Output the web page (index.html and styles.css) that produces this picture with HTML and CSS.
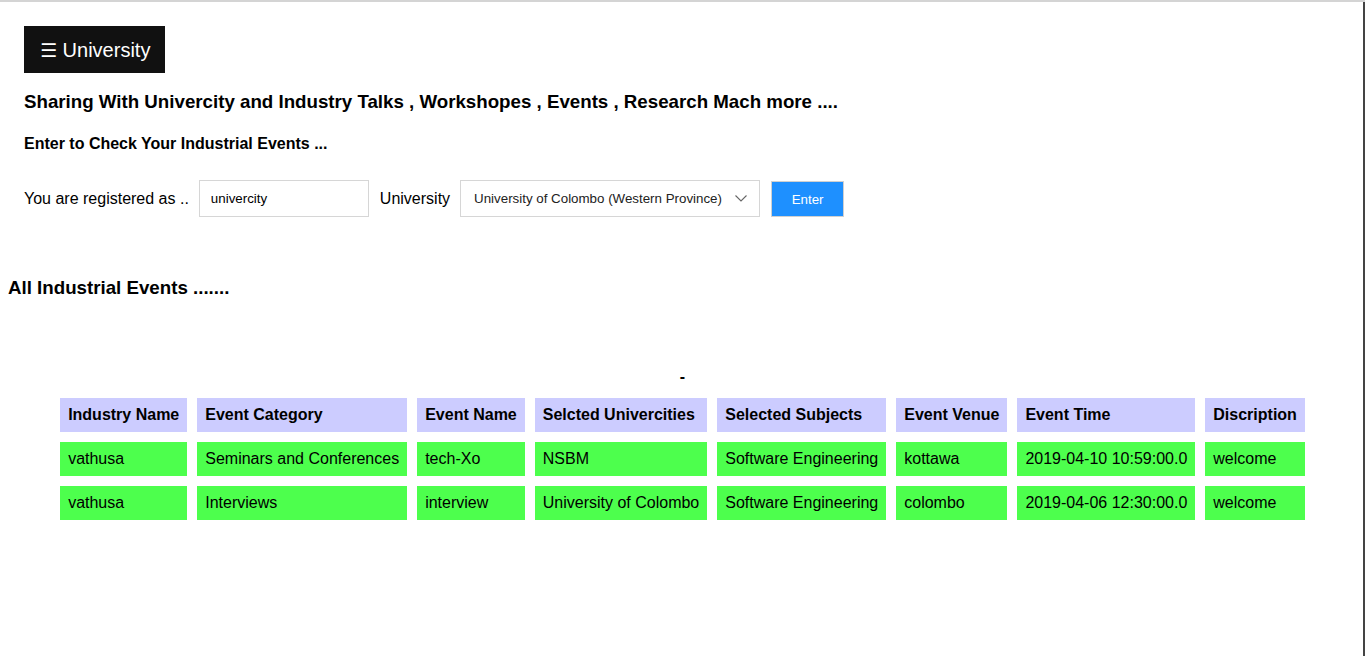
FILE: index.html
```html
<!DOCTYPE html>
<html lang="en">
<head>
<meta charset="utf-8">
<title>University</title>
<link rel="stylesheet" href="styles.css">
</head>
<body>
<div class="top">
  <div class="brand"><span class="burger">☰</span> University</div>
  <h3 class="lead">Sharing With Univercity and Industry Talks , Workshopes , Events , Research Mach more ....</h3>
  <h4 class="sub">Enter to Check Your Industrial Events ...</h4>
  <form class="reg">
    <label class="lbl">You are registered as ..</label>
    <input class="field" type="text" value="univercity">
    <label class="lbl">University</label>
    <div class="sel-wrap">
      <select class="sel">
        <option>University of Colombo (Western Province)</option>
      </select>
      <svg class="chev" width="12" height="7" viewBox="0 0 12 7"><path d="M0.5 0.5 L6 6 L11.5 0.5" fill="none" stroke="#666" stroke-width="1.1"/></svg>
    </div>
    <button class="btn" type="button">Enter</button>
  </form>
</div>
<h3 class="all">All Industrial Events .......</h3>
<div class="dash">-</div>
<table class="events">
  <tr>
    <th>Industry Name</th><th>Event Category</th><th>Event Name</th><th>Selcted Univercities</th><th>Selected Subjects</th><th>Event Venue</th><th>Event Time</th><th>Discription</th>
  </tr>
  <tr>
    <td>vathusa</td><td>Seminars and Conferences</td><td>tech-Xo</td><td>NSBM</td><td>Software Engineering</td><td>kottawa</td><td>2019-04-10 10:59:00.0</td><td>welcome</td>
  </tr>
  <tr>
    <td>vathusa</td><td>Interviews</td><td>interview</td><td>University of Colombo</td><td>Software Engineering</td><td>colombo</td><td>2019-04-06 12:30:00.0</td><td>welcome</td>
  </tr>
</table>
</body>
</html>
```
FILE: styles.css
```css
html {
  box-shadow: inset 0 2px 0 #d4d4d4, inset -2px 0 0 #444;
  min-height: 100%;
  background: #fff;
}
body {
  margin: 0;
  padding-top: 2px;
  font-family: "Liberation Sans", Arial, sans-serif;
  color: #000;
}
.top {
  padding: 24px 24px 0 24px;
}
.brand {
  display: inline-block;
  background: #111;
  color: #fff;
  font-size: 20px;
  height: 47px;
  box-sizing: border-box;
  padding: 2px 15px 0 16px;
  line-height: 45px;
}
.burger {
  font-family: "DejaVu Sans", sans-serif;
  font-size: 19px;
}
.lead {
  font-size: 18.72px;
  margin: 18px 0 0 0;
  line-height: 22px;
}
.sub {
  font-size: 16px;
  margin: 22px 0 0 0;
  line-height: 18px;
}
.reg {
  display: flex;
  align-items: center;
  margin-top: 27px;
}
.lbl {
  font-size: 16px;
  margin-right: 10px;
}
.field {
  box-sizing: border-box;
  width: 170px;
  height: 37px;
  border: 1px solid #d6d6d6;
  padding: 0 11px;
  font-family: "Liberation Sans", Arial, sans-serif;
  font-size: 13.33px;
  color: #000;
  margin: 0 11px 0 0;
  outline: none;
}
.sel-wrap {
  position: relative;
  width: 300px;
  height: 37px;
  margin-right: 11px;
}
.sel {
  appearance: none;
  -webkit-appearance: none;
  box-sizing: border-box;
  width: 300px;
  height: 37px;
  border: 1px solid #d6d6d6;
  background: #fff;
  padding: 0 0 0 13px;
  font-family: "Liberation Sans", Arial, sans-serif;
  font-size: 13.33px;
  color: #222;
  border-radius: 0;
  outline: none;
}
.chev {
  position: absolute;
  left: 275px;
  top: 15px;
}
.btn {
  box-sizing: border-box;
  width: 73px;
  height: 36px;
  background: #1e90ff;
  color: #fff;
  border: 1px solid #d0d0d0;
  font-family: "Liberation Sans", Arial, sans-serif;
  font-size: 13.33px;
  margin-top: 1px;
}
.all {
  font-size: 18.72px;
  line-height: 22px;
  margin: 60px 0 0 8px;
}
.dash {
  text-align: center;
  font-size: 16px;
  line-height: 18px;
  margin-top: 69px;
  font-weight: bold;
}
.events {
  margin: 2px auto 0 auto;
  border-spacing: 10px;
  font-size: 16px;
}
.events th,
.events td {
  text-align: left;
  padding: 8px;
  line-height: normal;
  white-space: nowrap;
}
.events th {
  background: #ccccff;
}
.events td {
  background: #4dff4d;
}
```
